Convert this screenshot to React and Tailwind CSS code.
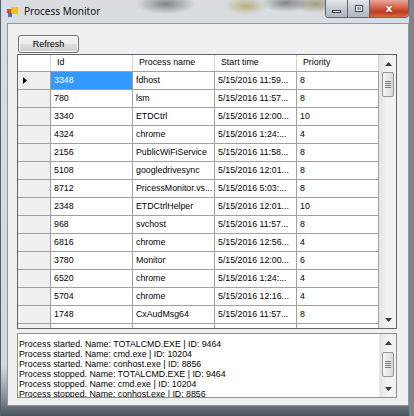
import React from "react";

const rows = [
  ["3348", "fdhost", "5/15/2016 11:59...", "8"],
  ["780", "lsm", "5/15/2016 11:57...", "8"],
  ["3340", "ETDCtrl", "5/15/2016 12:00...", "10"],
  ["4324", "chrome", "5/15/2016 1:24:...", "4"],
  ["2156", "PublicWiFiService", "5/15/2016 11:58...", "8"],
  ["5108", "googledrivesync", "5/15/2016 12:01...", "8"],
  ["8712", "PricessMonitor.vs...", "5/15/2016 5:03:...", "8"],
  ["2348", "ETDCtrlHelper", "5/15/2016 12:01...", "10"],
  ["968", "svchost", "5/15/2016 11:57...", "8"],
  ["6816", "chrome", "5/15/2016 12:56...", "4"],
  ["3780", "Monitor", "5/15/2016 12:00...", "6"],
  ["6520", "chrome", "5/15/2016 1:24:...", "4"],
  ["5704", "chrome", "5/15/2016 12:16...", "4"],
  ["1748", "CxAudMsg64", "5/15/2016 11:57...", "8"],
  ["", "", "", ""],
];

const log = [
  "Process started. Name: TOTALCMD.EXE | ID: 9464",
  "Process started. Name: cmd.exe | ID: 10204",
  "Process started. Name: conhost.exe | ID: 8856",
  "Process stopped. Name: TOTALCMD.EXE | ID: 9464",
  "Process stopped. Name: cmd.exe | ID: 10204",
  "Process stopped. Name: conhost.exe | ID: 8856",
];

const Arrow = ({ down }) => (
  <svg width="7" height="4" viewBox="0 0 7 4">
    <polygon points={down ? "0,0 7,0 3.5,4" : "3.5,0 7,4 0,4"} fill="#3c3c3c" />
  </svg>
);

// vertical scroll bar, win7 style
const ScrollBar = ({ thumbTop, thumbH }) => (
  <div className="w-[17px] h-full flex flex-col bg-[linear-gradient(to_right,#e4e4e4,#f2f2f2_40%,#f2f2f2)] border-l border-[#e8e8e8]">
    <div className="h-[17px] flex items-center justify-center">
      <Arrow />
    </div>
    <div className="flex-1 px-[1px]">
      <div
        className="mx-[1px] rounded-[2px] border border-[#979797] bg-[linear-gradient(to_right,#f6f6f6,#e8e8e8_50%,#d8d8d8)] flex flex-col items-center justify-center gap-[1px]"
        style={{ marginTop: thumbTop, height: thumbH }}
      >
        <div className="w-[6px] h-[1px] bg-[#7a7a7a]" />
        <div className="w-[6px] h-[1px] bg-[#7a7a7a]" />
        <div className="w-[6px] h-[1px] bg-[#7a7a7a]" />
        <div className="w-[6px] h-[1px] bg-[#7a7a7a]" />
      </div>
    </div>
    <div className="h-[17px] flex items-center justify-center">
      <Arrow down />
    </div>
  </div>
);

const Cell = ({ children, sel }) => (
  <div
    className={`w-[82px] h-full border-r border-[#a0a0a0] pl-[3px] flex items-center overflow-hidden whitespace-nowrap ${
      sel ? "bg-[#3399ff] text-white" : "bg-white text-black"
    }`}
  >
    {children}
  </div>
);

export default function App() {
  return (
    <div className="w-[414px] h-[416px] overflow-hidden flex flex-col border-l border-[#56606b] border-r-[5px] border-r-[#7d858e] bg-[linear-gradient(to_bottom,#d9dde2,#d2d8de_88%,#8d959e_95%,#4b545e)] font-['Liberation_Sans',Arial,sans-serif] text-[8.8px] text-black">
      {/* title bar */}
      <div className="h-[23px] flex items-start shrink-0 bg-[radial-gradient(ellipse_30px_10px_at_165px_4px,#7e8388,transparent),radial-gradient(ellipse_22px_9px_at_245px_6px,#b8ae80,transparent),radial-gradient(ellipse_25px_9px_at_285px_3px,#80858a,transparent),radial-gradient(ellipse_25px_9px_at_315px_4px,#a29b80,transparent)]">
        <svg className="mt-[7px] ml-[6px]" width="12" height="11" viewBox="0 0 12 11">
          <rect x="0" y="2" width="4" height="4" fill="#e8402a" />
          <rect x="4" y="0" width="7" height="7" fill="#f4c020" />
          <rect x="1" y="6" width="4" height="4" fill="#3a78d8" />
        </svg>
        <span className="ml-[5px] mt-[5px] text-[10px] font-['Noto_Sans',sans-serif] text-[#101010] leading-[13px]">
          Process Monitor
        </span>
        <div className="ml-auto flex h-[18px] rounded-b-[4px] border border-t-0 border-[#5d6570] overflow-hidden">
          <div className="w-[22px] flex items-end justify-center pb-[4px] border-r border-[#5d6570] bg-[linear-gradient(to_bottom,#e4e8ec,#c4cbd2_50%,#aeb6be)]">
            <div className="w-[9px] h-[3px] bg-white border border-[#3a424c]" />
          </div>
          <div className="w-[22px] flex items-center justify-center border-r border-[#5d6570] bg-[linear-gradient(to_bottom,#e4e8ec,#c4cbd2_50%,#aeb6be)]">
            <div className="w-[8px] h-[7px] border border-[#3a424c] bg-white flex items-center justify-center">
              <div className="w-[4px] h-[3px] bg-[#9aa2aa]" />
            </div>
          </div>
          <div className="w-[38px] flex items-center justify-center bg-[linear-gradient(to_bottom,#e8a898,#d05a40_50%,#c03820_70%,#d86a48)]">
            <span className="text-white font-bold text-[11px] leading-none font-['DejaVu_Sans',sans-serif] [text-shadow:0_0_2px_#602010]">
              x
            </span>
          </div>
        </div>
      </div>

      {/* client area */}
      <div className="ml-[6px] w-[402px] h-[383px] shrink-0 border border-[#8e98a3] bg-[#f0f0f0] flex flex-col">
        <button className="mt-[11px] ml-[10px] w-[61px] h-[18px] rounded-[3px] border border-[#707070] bg-[linear-gradient(to_bottom,#f2f2f2,#ebebeb_50%,#dddddd_50%,#cfcfcf)] text-[9px] leading-none text-black shadow-[inset_0_0_0_1px_#fcfcfc]">
          Refresh
        </button>

        {/* data grid */}
        <div className="mt-[1px] ml-[9px] w-[380px] h-[275px] border border-[#646464] bg-[#ababab] flex overflow-hidden">
          <div className="w-[361px] flex flex-col">
            <div className="h-[17px] flex shrink-0 bg-white border-b border-[#a0a0a0]">
              <div className="w-[33px] border-r border-[#d5d5d5]" />
              {["Id", "Process name", "Start time", "Priority"].map((h) => (
                <div key={h} className="w-[82px] border-r border-[#d5d5d5] pl-[6px] flex items-center">
                  {h}
                </div>
              ))}
            </div>
            {rows.map((r, i) => (
              <div key={i} className="h-[18px] flex shrink-0 border-b border-[#a0a0a0]">
                <div className="w-[33px] h-full bg-[#f0f0f0] border-r border-[#a0a0a0] flex items-center pl-[5px]">
                  {i === 0 && (
                    <svg width="4" height="7" viewBox="0 0 4 7">
                      <polygon points="0,0 4,3.5 0,7" fill="#000" />
                    </svg>
                  )}
                </div>
                <Cell sel={i === 0}>{r[0]}</Cell>
                <Cell>{r[1]}</Cell>
                <Cell>{r[2]}</Cell>
                <Cell>{r[3]}</Cell>
              </div>
            ))}
          </div>
          <ScrollBar thumbTop={0} thumbH={25} />
        </div>

        {/* log textbox */}
        <div className="mt-[4px] ml-[9px] w-[380px] h-[65px] border border-[#8c8f94] bg-white flex overflow-hidden">
          <div className="flex-1 pl-[1px] pt-[5px] leading-[10px] whitespace-nowrap overflow-hidden">
            {log.map((l) => (
              <div key={l}>{l}</div>
            ))}
          </div>
          <ScrollBar thumbTop={1} thumbH={25} />
        </div>
      </div>
    </div>
  );
}
